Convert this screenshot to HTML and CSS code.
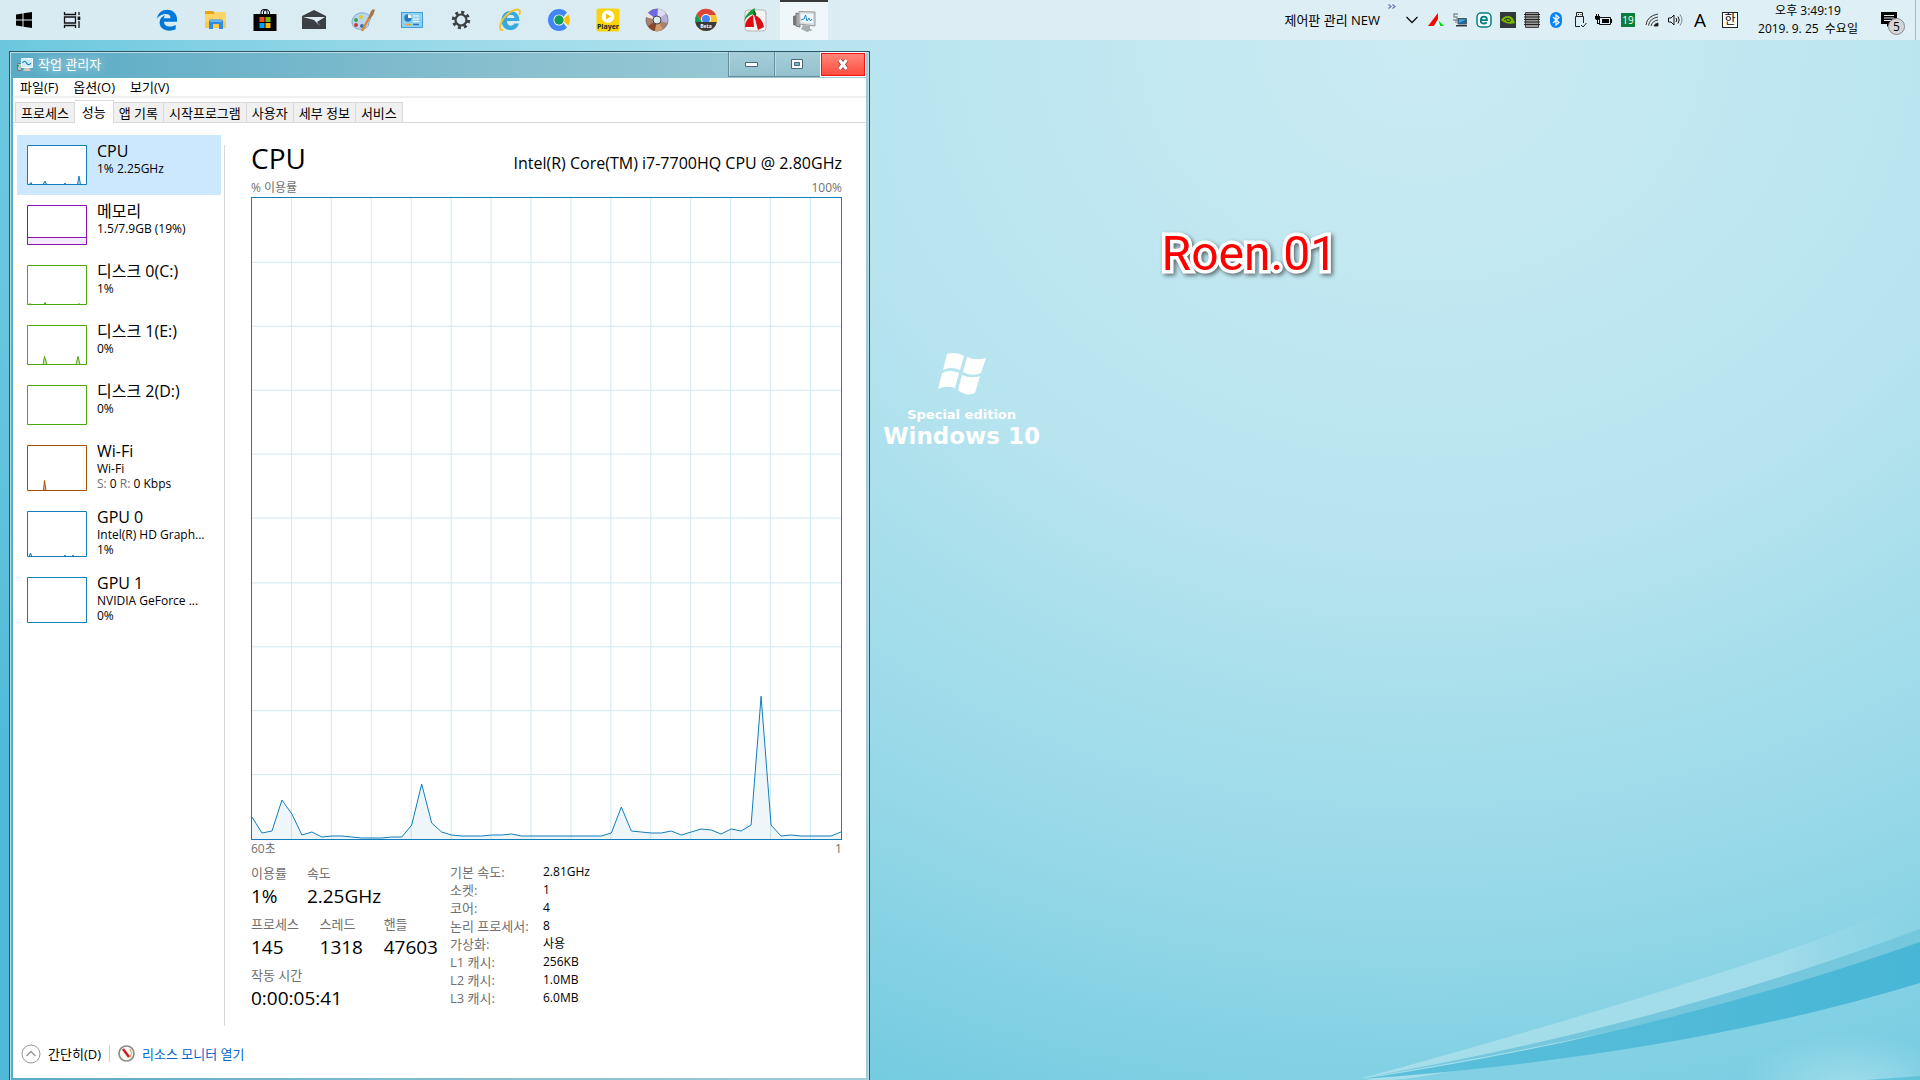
FILE: index.html
```html
<!DOCTYPE html>
<html lang="ko">
<head>
<meta charset="utf-8">
<title>작업 관리자</title>
<link rel="stylesheet" href="styles.css">
</head>
<body>
<svg class="wallpaper" viewBox="0 0 1920 1080" preserveAspectRatio="xMidYMid slice" aria-hidden="true">
  <defs>
    <linearGradient id="lightRay" x1="0" x2="1"><stop offset="0" stop-color="#a6deea"/><stop offset=".75" stop-color="#a2dcea"/><stop offset="1" stop-color="#8fd5e6" stop-opacity="0"/></linearGradient>
    <linearGradient id="darkRay" x1="0" x2="1"><stop offset="0" stop-color="#5cc0da"/><stop offset="1" stop-color="#48b6d6"/></linearGradient>
    <radialGradient id="cornerGlow"><stop offset="0" stop-color="#a8e0ec" stop-opacity=".8"/><stop offset="1" stop-color="#a8e0ec" stop-opacity="0"/></radialGradient>
  </defs>
  <ellipse cx="1850" cy="1084" rx="110" ry="50" fill="url(#cornerGlow)"/>
  <path d="M1362 1078Q1561 1024 1735 968T1920 884V929Q1755 990 1577 1040T1362 1078Z" fill="url(#lightRay)"/>
  <path d="M1362 1078Q1660 1026 1920 929V945Q1700 1024 1362 1078Z" fill="#74c7dd"/>
  <path d="M1362 1079Q1660 1034 1920 942V983Q1680 1056 1362 1079Z" fill="url(#darkRay)"/>
  <path d="M1866 1080L1920 1076V1080Z" fill="#62c2da"/>
</svg>

<header class="taskbar">
  <nav class="system-buttons" aria-label="시스템">
    <button class="task" aria-label="시작"><svg width="18" height="18" viewBox="0 0 18 18"><path d="M1 3.5L7.5 2.5V8.500H1ZM8.500 2.300L17 1V8.500H8.500ZM1 9.500H7.500V15.500L1 14.500ZM8.500 9.500H17V17L8.500 15.700Z"/></svg></button>
    <button class="task" aria-label="작업 보기"><svg width="18" height="18" viewBox="0 0 18 18" fill="none" stroke="#111" stroke-width="1.300"><path d="M1.500 1V3.500H12.500V1M1.500 17V14.500H12.500V17M1.500 6H12.500V12H1.500ZM16 1V4M16 10V17"/><path d="M16 5.500V9" stroke-width="2.600"/></svg></button>
  </nav>
  <nav class="pinned" aria-label="앱">
    <button class="task" aria-label="Edge"><svg width="22" height="22" viewBox="0 0 22 22"><path fill="#0078d7" d="M1 9.500C2 4 6 .8 11.300.8 17.500.8 21 5.500 21 10V12.700H8C8 16 11 17.600 14 17.600 16.400 17.600 18.300 16.800 19.700 16V20.300C18 21.200 15.800 21.700 13.200 21.700 7.500 21.700 3.600 18.300 3.600 13.600 3.600 10.200 5.800 7.300 9 6.200 8.300 7 7.900 8.100 7.800 9.200H14.500C14.500 6.500 12.800 5.100 10 5.100 6.400 5.100 3 7 1 9.500Z"/></svg></button>
    <button class="task" aria-label="파일 탐색기"><svg width="22" height="20" viewBox="0 0 22 20"><path fill="#e6a518" d="M0 1H8L10 3V6H0Z"/><path fill="#ffd567" d="M0 4H9L11 2H21V18H0Z"/><path fill="#fbc94d" d="M0 12H21V18H0Z"/><path fill="#2f8be0" d="M4 19V11Q4 9.500 5.500 9.500H16.500Q18 9.500 18 11V19H14V14H8V19Z"/><path fill="#63b3f2" d="M5 10H17V12H5Z"/></svg></button>
    <button class="task" aria-label="스토어"><svg width="24" height="24" viewBox="0 0 24 24"><path d="M8 7V4Q8 1.500 11 1.500T14 4V7M10.500 7V4Q10.500 1.500 13 1.500T16.500 4V7" fill="none" stroke="#000" stroke-width="1"/><path d="M.5 6H23.500V23H.5Z"/><path fill="#f25022" d="M6.500 9H11.500V14H6.500Z"/><path fill="#7fba00" d="M12.500 9H17.500V14H12.500Z"/><path fill="#00a4ef" d="M6.500 15H11.500V20H6.500Z"/><path fill="#ffb900" d="M12.500 15H17.500V20H12.500Z"/></svg></button>
    <button class="task" aria-label="메일"><svg width="26" height="22" viewBox="0 0 26 22"><path fill="#3b4045" d="M1 7L13 1 25 7V20H1Z"/><path fill="#dcecf2" d="M2 8H24L16 13 19 17 13 11Z"/></svg></button>
    <button class="task" aria-label="그림판"><svg width="26" height="24" viewBox="0 0 26 24"><path fill="#b9d8ee" stroke="#7fabcf" d="M2 14C2 8 8 4 14 5 19 6 22 9 20 12 18 14 20 18 16 20 11 23 2 21 2 14Z"/><circle cx="6" cy="12" r="2" fill="#46a04a"/><circle cx="11" cy="9" r="2" fill="#e5c732"/><circle cx="6" cy="17" r="2" fill="#cf3c2f"/><circle cx="12" cy="18" r="2" fill="#3d6ec2"/><path d="M12 23L19 10" stroke="#dd8a32" stroke-width="2.500"/><path d="M18 10L21 3Q23 0 25 2 24 7 20 11Z" fill="#a8774b"/></svg></button>
    <button class="task" aria-label="제어판"><svg width="22" height="18" viewBox="0 0 22 18"><path fill="#3f9edb" d="M0 1H22V17H0Z"/><path fill="#8fd0f5" d="M1 2H21V16H1Z"/><circle cx="7" cy="7" r="3.700" fill="#2779bf"/><path fill="#fff" d="M7 7V3.300A3.700 3.700 0 0 1 10.700 7Z"/><path stroke="#fff" d="M12 5H18M12 8H18M12 10.500H18"/><path stroke="#f6a623" stroke-width="1.500" d="M4 13.500H11"/><path stroke="#2779bf" stroke-width="1.500" d="M12 13.500H18"/></svg></button>
    <button class="task" aria-label="설정"><svg width="20" height="20" viewBox="0 0 20 20" fill="none" stroke="#3c4043"><circle cx="10" cy="10" r="5.500" stroke-width="2.200"/><circle cx="10" cy="10" r="7.700" stroke-width="3" stroke-dasharray="3.020 3.020"/></svg></button>
    <button class="task" aria-label="Internet Explorer"><svg width="24" height="24" viewBox="0 0 24 24"><path fill="#36a9e1" d="M12 3C18 3 21.500 7 21.500 13H9C9 19 15 18.500 16.500 15.500H21C19.500 20 16.500 22 12.500 22 7 22 3.500 18 3.500 12.500S7 3 12 3ZM9 10H16.500C16.500 5.800 9 5.800 9 10Z"/><path fill="none" stroke="#f4c430" stroke-width="2" d="M5 22C1 23 1 17 5 11 10 4 18 0 21 2 22.500 3 22 5 21 7"/></svg></button>
    <button class="task" aria-label="브라우저"><svg width="22" height="22" viewBox="0 0 22 22"><circle cx="11" cy="11" r="8" fill="none" stroke="#4285f4" stroke-width="6"/><path fill="#dcecf2" d="M13 11L20 2 23 11 20 20Z"/><path fill="#fbbc05" d="M14 11L20.500 5.500 22 11 20.500 16.500Z"/><circle cx="11" cy="11" r="5.500" fill="#fff"/><circle cx="11" cy="11" r="4.700" fill="#0f9d58"/></svg></button>
    <button class="task" aria-label="플레이어"><svg width="24" height="24" viewBox="0 0 24 24"><rect x=".5" y=".5" width="23" height="23" rx="2" fill="#f9d30d"/><circle cx="12" cy="8.500" r="6.300" fill="#fff"/><path fill="#f0bf00" d="M10 5.500L15 8.500 10 11.500Z"/><text x="12" y="21" text-anchor="middle" class="icon-text" fill="#222">Player</text></svg></button>
    <button class="task" aria-label="디스크"><svg width="24" height="24" viewBox="0 0 24 24"><circle cx="12" cy="12" r="11" fill="#a9826f" stroke="#777"/><path fill="#7068e8" d="M12 12L3 5Q7 1 13 1Z"/><path fill="#dcdcf5" d="M12 12L13 1Q18 1 21 6Z"/><path fill="#b6afd8" d="M12 12L21 6Q24 11 22 15Z"/><path fill="#8a4a28" d="M12 12L3 18Q5 22 10 23Z"/><path fill="#d39a70" d="M12 12L10 23Q14 24 18 21Z"/><path fill="#efe8e8" d="M12 12L1 9Q1 6 3 5Z"/><circle cx="12" cy="12" r="4" fill="#dcecf2" stroke="#444"/></svg></button>
    <button class="task" aria-label="Chrome Beta"><svg width="24" height="24" viewBox="0 0 24 24"><circle cx="12" cy="12" r="11" fill="#fbc02d"/><path fill="#db4437" d="M2.500 6.500A11 11 0 0 1 22 7H12L8 13Z"/><path fill="#0f9d58" d="M2.500 6.500L8 14H1.200A11 11 0 0 1 2.500 6.500Z"/><circle cx="12" cy="11" r="5" fill="#fff"/><circle cx="12" cy="11" r="4" fill="#4285f4"/><path fill="#3a3a3a" d="M1.200 14H22.800A11 11 0 0 1 1.200 14Z"/><text x="12" y="19.500" text-anchor="middle" class="icon-text tiny" fill="#fff">Beta</text></svg></button>
    <button class="task" aria-label="캡처"><svg width="26" height="26" viewBox="0 0 26 26"><rect x="3" y="3" width="21" height="21" rx="3" fill="#f4f4f4" stroke="#b5b5b5"/><path fill="#1b9a36" d="M2 14Q4 5 13 1L12 7Q6 8 2 14Z"/><path fill="#0a6c1f" d="M12 3Q15 6 14 9L11 8Z"/><path fill="#e30b13" d="M3 20Q3 12 11 8L12 20Z"/><path fill="#d80f16" d="M12 8Q20 10 22 20L16 23Z"/></svg></button>
    <button class="task active" aria-label="작업 관리자"><svg width="24" height="22" viewBox="0 0 24 22"><path fill="#777" d="M1 6L5 5V16L1 15Z"/><path fill="#aaa" stroke="#777" d="M4 3L8 4V17L4 16Z"/><path fill="#d9dde0" stroke="#999" d="M7 1.500L23 2V16L7 14Z"/><path fill="#eaf7ff" d="M9 3.500L21 4V13.500L9 12Z"/><path fill="none" stroke="#2488cc" d="M9 10L12 9 13.500 5 15 11 17 8 18.500 11 20 9"/><path fill="#a9adb0" d="M11 15L18 16V19L21 20 15 22 9 19Z"/></svg></button>
  </nav>
  <div class="tray">
    <span class="toolbar-label">제어판 관리 NEW</span>
    <button class="more" aria-label="더 보기"><svg width="8" height="5" viewBox="0 0 8 5" fill="none" stroke="#6a74b4" stroke-width="1.200"><path d="M.5.500L3 2.500.5 4.500M4.500.500L7 2.500 4.500 4.500"/></svg></button>
    <button class="tray-icon" aria-label="숨겨진 아이콘"><svg width="14" height="8" viewBox="0 0 14 8" fill="none" stroke="#111" stroke-width="1.300"><path d="M1.500 1L7 6.500 12.500 1"/></svg></button>
    <button class="tray-icon" aria-label="캡처"><svg width="16" height="14" viewBox="0 0 16 14"><path fill="#f00" d="M0 13L10 0V7L6 13Z"/><path fill="#00e000" d="M10 7L16 13H12Z"/><path fill="#dff" d="M6 13L10 6 12 13Z"/></svg></button>
    <button class="tray-icon" aria-label="네트워크"><svg width="16" height="16" viewBox="0 0 16 16"><path fill="none" stroke="#8a9093" stroke-width="1.300" d="M6 2H2V5H5V8H1M4 8V11"/><path fill="#156a9f" stroke="#4c575e" d="M6 6.500H14.500V12H6Z"/><path fill="#4aa9db" d="M7 7.500H14L7 11Z"/><path fill="#30383e" d="M4 13H15V14.500H4Z"/></svg></button>
    <button class="tray-icon" aria-label="ESET"><svg width="16" height="16" viewBox="0 0 16 16"><rect x="1" y="1" width="14" height="14" rx="4" fill="#fff" stroke="#007e85" stroke-width="1.500"/><path fill="none" stroke="#007e85" stroke-width="1.800" d="M4.800 8.200H11Q11 4.700 8 4.700T4.800 8.200 8 11.500Q9.500 11.500 10.800 10.500"/></svg></button>
    <button class="tray-icon" aria-label="NVIDIA"><svg width="16" height="16" viewBox="0 0 16 16"><path fill="#33383d" d="M0 0H16V16H0Z"/><path fill="#76b900" d="M1 8Q4 3.500 9 4 13 4.500 15 11 12 12 8 11.500 3.500 11 1 8Z"/><path fill="none" stroke="#263a08" d="M4 8Q7 5 10 7 12 9 9 9.500T6.500 7.500"/></svg></button>
    <button class="tray-icon" aria-label="메모리"><svg width="16" height="16" viewBox="0 0 16 16"><path fill="#999" stroke="#444" d="M1.500.5H14.500V15.500H1.500Z"/><path stroke="#222" stroke-width="1.200" d="M0 2.500H16M0 5H16M0 7.500H16M0 10H16M0 12.500H16"/></svg></button>
    <button class="tray-icon" aria-label="Bluetooth"><svg width="14" height="16" viewBox="0 0 14 16"><rect x="1" y="0" width="12" height="16" rx="6" fill="#0a84f5"/><path fill="none" stroke="#fff" stroke-width="1.200" d="M4 5L10 10.500 7 13V3L10 5.500 4 11"/></svg></button>
    <button class="tray-icon" aria-label="USB"><svg width="14" height="18" viewBox="0 0 14 18" fill="none" stroke="#222"><path d="M3.500 1.500H9.500V5.500H3.500ZM2.500 5.500H10.500V12M2.500 5.500V15.500H7M8 14L10 16 13.500 12M5 3.500H6M7.500 3.500H8.500"/></svg></button>
    <button class="tray-icon" aria-label="배터리"><svg width="18" height="12" viewBox="0 0 18 12"><path fill="none" stroke="#111" d="M4.500 3.500H15.500V10.500H4.500Z"/><path d="M7 5H14V9H7ZM16 5H17V9H16ZM0 2H5V4Q5 6 3 6H2Q0 6 0 4ZM1 0H2V2H1ZM3 0H4V2H3ZM2 6H3V9H4V8H5V10H2Z"/></svg></button>
    <button class="tray-icon" aria-label="온도 19"><span class="temperature">19</span></button>
    <button class="tray-icon" aria-label="Wi-Fi"><svg width="14" height="14" viewBox="0 0 14 14" fill="none" stroke="#333"><path d="M1 12Q2 3 13 1M3.500 12.500Q4.500 5.500 13 4M6 13Q7 8 13 7"/><path d="M9 13Q9.500 10.500 13 10V13Z" fill="#111"/></svg></button>
    <button class="tray-icon" aria-label="볼륨"><svg width="18" height="14" viewBox="0 0 18 14" fill="none" stroke="#111"><path d="M1.500 5H4L7 2V12L4 9H1.500ZM9 5Q10.500 7 9 9M11 3.500Q13.500 7 11 10.500"/><path stroke="#888" d="M13 1.500Q17 7 13 12.500"/></svg></button>
    <button class="tray-icon ime">A</button>
    <button class="tray-icon hangul"><span class="hangul-box">한</span></button>
    <div class="clock"><time>오후 3:49:19</time><time>2019. 9. 25&nbsp; 수요일</time></div>
    <button class="notifications" aria-label="알림"><svg width="17" height="16" viewBox="0 0 17 16"><path d="M0 0H16V12H9L6 15V12H0Z"/><path stroke="#dcecf2" stroke-width="1.200" d="M3 3.500H13M3 6H13M3 8.500H13"/></svg><span class="badge">5</span></button>
    <span class="show-desktop"></span>
  </div>
</header>

<main class="desktop">
  <section class="window" aria-label="작업 관리자">
    <header class="titlebar">
      <svg width="17" height="14" viewBox="0 0 17 14"><path fill="#bfc5c8" stroke="#6a7b82" d="M.5 5.500H4.500V12.500H.5Z"/><path fill="#2db330" d="M1 7H2V9H1Z"/><path fill="#e8eef2" stroke="#fff" d="M4.500.5H15.500V9.500H4.500Z"/><path fill="#cdeeff" d="M5 1H15V9H5Z"/><path fill="none" stroke="#1a78ba" stroke-width="1.200" d="M5.500 5Q7.500 1.500 9.500 5T14 5"/><path fill="#d9c7bd" d="M8 10H12L14 13H6Z"/></svg>
      <h1>작업 관리자</h1>
      <div class="window-buttons">
        <button aria-label="최소화"><svg width="13" height="6" viewBox="0 0 13 6"><path fill="#fff" stroke="#476b77" d="M.5 1.500H12.500V5.500H.5Z"/></svg></button>
        <button aria-label="최대화"><svg width="12" height="10" viewBox="0 0 12 10"><path fill="#fff" stroke="#476b77" d="M.5.5H11.500V9.500H.5Z"/><path fill="#7fb5c4" stroke="#476b77" d="M3.500 3.500H8.500V6.500H3.500Z"/></svg></button>
        <button class="close" aria-label="닫기"><svg width="12" height="11" viewBox="0 0 12 11"><path d="M2.500 1L9.500 10M9.500 1L2.500 10" stroke="#7d4540" stroke-width="4.500"/><path d="M2.500 1L9.500 10M9.500 1L2.500 10" stroke="#fff" stroke-width="3"/></svg></button>
      </div>
    </header>
    <div class="client">
      <nav class="menu"><button>파일(F)</button><button>옵션(O)</button><button>보기(V)</button></nav>
      <div class="tabs" role="tablist">
        <button role="tab">프로세스</button><button role="tab" aria-selected="true" class="selected">성능</button><button role="tab">앱 기록</button><button role="tab">시작프로그램</button><button role="tab">사용자</button><button role="tab">세부 정보</button><button role="tab">서비스</button>
      </div>
      <div class="performance">
        <aside class="resources">
          <button class="resource current"><svg class="thumb cpu" viewBox="0 0 60 40"><path d="M.5.5H59.500V39.500H.5Z"/><path class="spike" d="M2 39.500L4 37.500 5 39.500M16 39.500L18 36 19.500 39.500M37 39.500L38 38 39 39.500M50.500 39.500L52 31 53.500 39.500"/></svg><span class="info"><b>CPU</b><span>1% 2.25GHz</span></span></button>
          <button class="resource"><svg class="thumb memory" viewBox="0 0 60 40"><path d="M.5.5H59.500V39.500H.5Z"/><path class="fill" d="M.5 32.500H59.500V39.500H.5Z"/></svg><span class="info"><b>메모리</b><span>1.5/7.9GB (19%)</span></span></button>
          <button class="resource"><svg class="thumb disk" viewBox="0 0 60 40"><path d="M.5.5H59.500V39.500H.5Z"/><path class="spike" d="M2 39.500L3 38.500 4 39.500M17 39.500L18 37.500 19 39.500M51 39.500L52 38.500 53 39.500"/></svg><span class="info"><b>디스크 0(C:)</b><span>1%</span></span></button>
          <button class="resource"><svg class="thumb disk" viewBox="0 0 60 40"><path d="M.5.5H59.500V39.500H.5Z"/><path class="spike" d="M16 39.500L17.500 31.500 20 39.500M49 39.500L51 31.500 53 39.500"/></svg><span class="info"><b>디스크 1(E:)</b><span>0%</span></span></button>
          <button class="resource"><svg class="thumb disk" viewBox="0 0 60 40"><path d="M.5.5H59.500V39.500H.5Z"/></svg><span class="info"><b>디스크 2(D:)</b><span>0%</span></span></button>
          <button class="resource tall"><svg class="thumb wifi" viewBox="0 0 60 46"><path d="M.5.5H59.500V45.500H.5Z"/><path class="spike" d="M16.500 45.500L17.500 35.500 19 45.500"/></svg><span class="info"><b>Wi-Fi</b><span>Wi-Fi</span><span><i>S:</i> 0 <i>R:</i> 0 Kbps</span></span></button>
          <button class="resource tall"><svg class="thumb cpu" viewBox="0 0 60 46"><path d="M.5.5H59.500V45.500H.5Z"/><path class="spike" d="M2 45.500L3.500 42 5 45.500M37 45.500L38 44 39 45.500M45 45.500L46 44 47 45.500"/></svg><span class="info"><b>GPU 0</b><span>Intel(R) HD Graph...</span><span>1%</span></span></button>
          <button class="resource tall"><svg class="thumb cpu" viewBox="0 0 60 46"><path d="M.5.5H59.500V45.500H.5Z"/></svg><span class="info"><b>GPU 1</b><span>NVIDIA GeForce ...</span><span>0%</span></span></button>
        </aside>
        <section class="details">
          <div class="heading"><h2>CPU</h2><span>Intel(R) Core(TM) i7-7700HQ CPU @ 2.80GHz</span></div>
          <div class="scale"><span>% 이용률</span><span>100%</span></div>
          <svg class="graph" viewBox="0 0 590 642" preserveAspectRatio="none" role="img" aria-label="CPU 이용률">
            <path class="grid" d="M39.500 0V642M79.500 0V642M119.500 0V642M159.500 0V642M199.500 0V642M239.500 0V642M279.500 0V642M319.500 0V642M359.500 0V642M399.500 0V642M439.500 0V642M479.500 0V642M519.500 0V642M559.500 0V642M0 64.500H590M0 128.500H590M0 192.500H590M0 256.500H590M0 320.500H590M0 385.500H590M0 449.500H590M0 513.500H590M0 577.500H590"/>
            <path class="area" d="M0 642V620L10 636 20 634 30 603 40 617 50 638 60 635 70 640 80 639 90 639 100 640 110 641 120 641 130 641 140 640 150 640 160 628 170 587 180 626 190 635 200 638 210 639 230 639 240 638 250 638 260 637 270 639 350 639 360 636 370 610 380 634 390 635 400 636 410 636 420 634 430 638 440 635 450 632 460 633 470 637 480 632 490 634 500 628 510 499 520 628 530 639 540 638 550 639 580 639 590 635V642"/>
            <path class="line" d="M0 620L10 636 20 634 30 603 40 617 50 638 60 635 70 640 80 639 90 639 100 640 110 641 120 641 130 641 140 640 150 640 160 628 170 587 180 626 190 635 200 638 210 639 230 639 240 638 250 638 260 637 270 639 350 639 360 636 370 610 380 634 390 635 400 636 410 636 420 634 430 638 440 635 450 632 460 633 470 637 480 632 490 634 500 628 510 499 520 628 530 639 540 638 550 639 580 639 590 635"/>
          </svg>
          <div class="scale"><span>60초</span><span>1</span></div>
          <div class="figures">
            <div class="counters">
              <dl class="two"><div><dt>이용률</dt><dd>1%</dd></div><div><dt>속도</dt><dd>2.25GHz</dd></div></dl>
              <dl class="three"><div><dt>프로세스</dt><dd>145</dd></div><div><dt>스레드</dt><dd>1318</dd></div><div><dt>핸들</dt><dd>47603</dd></div></dl>
              <dl><div><dt>작동 시간</dt><dd>0:00:05:41</dd></div></dl>
            </div>
            <table class="specs">
              <tr><th scope="row">기본 속도:</th><td>2.81GHz</td></tr>
              <tr><th scope="row">소켓:</th><td>1</td></tr>
              <tr><th scope="row">코어:</th><td>4</td></tr>
              <tr><th scope="row">논리 프로세서:</th><td>8</td></tr>
              <tr><th scope="row">가상화:</th><td>사용</td></tr>
              <tr><th scope="row">L1 캐시:</th><td>256KB</td></tr>
              <tr><th scope="row">L2 캐시:</th><td>1.0MB</td></tr>
              <tr><th scope="row">L3 캐시:</th><td>6.0MB</td></tr>
            </table>
          </div>
        </section>
      </div>
      <footer class="statusbar">
        <button class="fewer"><svg width="20" height="20" viewBox="0 0 20 20" fill="none" stroke="#999"><circle cx="10" cy="10" r="9"/><path stroke-width="1.500" d="M5.500 12L10 7.500 14.500 12"/></svg>간단히(D)</button>
        <a class="monitor" href="#"><svg width="17" height="17" viewBox="0 0 17 17"><circle cx="8.500" cy="8.500" r="7.500" fill="#fbfaf5" stroke="#8a8f86" stroke-width="1.700"/><path fill="none" stroke="#d9935c" d="M12 4Q15 8 12 12.500"/><path stroke="#d01c2a" stroke-width="2.500" d="M5 4L11 12"/></svg>리소스 모니터 열기</a>
      </footer>
    </div>
  </section>

  <div class="edition">
    <svg width="50" height="44" viewBox="0 0 50 44" fill="#fff"><path d="M10 2Q19-1 27 4L23 18Q14 14 6 18ZM30 5Q39 9 49 6L44 21Q35 25 26 20ZM5 21Q13 17 22 21L18 36Q9 33 1 37ZM25 23Q34 27 43 24L38 41Q29 45 21 38Z"/></svg>
    <span class="edition-small">Special edition</span>
    <strong>Windows 10</strong>
  </div>
  <div class="signature">Roen.01</div>
</main>
</body>
</html>
```
FILE: styles.css
```css
* { box-sizing: border-box; }

body {
  margin: 0;
  min-height: 100vh;
  display: flex;
  flex-direction: column;
  overflow: hidden;
  color: #000;
  font: 12px/16px "Open Sans", "Noto Sans CJK KR", sans-serif;
  background: radial-gradient(ellipse 86% 130% at 74% 4%, #cbebf3 0%, #b7e4ef 36%, #96d8e8 62%, #6fc9df 84%, #50b9d9 100%);
}

button {
  margin: 0;
  padding: 0;
  border: 0;
  background: none;
  color: inherit;
  font: inherit;
}

svg { display: block; flex: none; }

.wallpaper {
  position: absolute;
  inset: 0;
  width: 100%;
  height: 100%;
}

/* Taskbar */

.taskbar {
  position: relative;
  display: flex;
  height: 40px;
  background: linear-gradient(90deg, #d8ebf2, #dcedf3 50%, #def0f5);
}

.system-buttons, .pinned, .tray { display: flex; align-items: center; }
.pinned { margin-left: 47px; gap: 1px; }

.task {
  display: flex;
  justify-content: center;
  align-items: center;
  width: 48px;
  height: 40px;
}

.task.active {
  background: #f0f7fb;
  border-top: 2px solid #3a3a3a;
}

.icon-text { font: bold 7px "Open Sans", sans-serif; }
.icon-text.tiny { font-size: 5px; }

.tray { margin-left: auto; }
.toolbar-label { margin-right: 8px; font-size: 13px; }

.more {
  align-self: flex-start;
  padding: 4px 0;
  margin-right: 4px;
}

.tray-icon {
  display: flex;
  justify-content: center;
  align-items: center;
  width: 24px;
  height: 40px;
}

.temperature {
  width: 14px;
  background: #0c7d3c;
  color: #fff;
  font-size: 10px;
  line-height: 14px;
}

.ime { font-size: 19px; }
.hangul { width: 36px; }

.hangul-box {
  width: 16px;
  border: 1px solid #222;
  background: #fff;
  line-height: 14px;
}

.clock {
  display: flex;
  flex-direction: column;
  gap: 2px;
  width: 120px;
  text-align: center;
}

.notifications {
  position: relative;
  width: 47px;
  padding: 0 13px;
}

.badge {
  position: absolute;
  left: 20px;
  top: 6px;
  width: 17px;
  height: 17px;
  border: 1px solid #888;
  border-radius: 50%;
  background: #d4d6d7;
  line-height: 15px;
}

.show-desktop {
  width: 5px;
  height: 40px;
  border-left: 1px solid #a8bcc3;
}

/* Desktop */

.desktop {
  position: relative;
  flex: 1;
  display: flex;
  padding: 11px 0 0 9px;
}

.edition {
  position: absolute;
  left: 46%;
  top: 30%;
  display: flex;
  flex-direction: column;
  align-items: center;
  color: #fff;
  font-family: "DejaVu Sans", sans-serif;
  font-weight: bold;
}

.edition-small { margin-top: 11px; font-size: 13px; line-height: 16px; }
.edition strong { font-size: 23px; line-height: 26px; }

.signature {
  position: absolute;
  left: 60.5%;
  top: 18%;
  color: #f00;
  font: 48px/54px Roboto, sans-serif;
  -webkit-text-stroke: 7px #fff;
  paint-order: stroke fill;
  filter: drop-shadow(2px 2px 2px #0008);
}

/* Task manager window */

.window {
  width: calc(45% + 1px);
  display: flex;
  flex-direction: column;
  padding: 0 3px 2px;
  border: 1px solid #2d5463;
  border-bottom: 0;
  background: linear-gradient(90deg, #5aabc6, #8ac0cf 60%, #9fccd8);
  box-shadow: inset 1px 1px #b9dfea, inset -1px 0 #b9dfea;
}

.titlebar { display: flex; align-items: center; height: 26px; padding-left: 4px; }

.titlebar h1 {
  flex: 1;
  margin: 0 0 0 4px;
  padding-bottom: 3px;
  color: #fff;
  font-size: 13px;
  font-weight: normal;
  text-shadow: 0 0 8px #fffc;
}

.window-buttons { display: flex; align-self: stretch; padding-bottom: 1px; }

.window-buttons button {
  display: flex;
  justify-content: center;
  align-items: center;
  width: 46px;
  border: 1px solid #668d99;
  border-width: 0 0 1px 1px;
  background: linear-gradient(#a6ced8, #93c1cd);
  box-shadow: inset 1px 0 #c0dde4;
}

.window-buttons .close {
  border: 1px solid #fff;
  background: linear-gradient(#ff8a7c, #ff4a3c);
  box-shadow: inset 0 0 0 1px #f01414;
}

.client {
  flex: 1;
  display: flex;
  flex-direction: column;
  background: #fff;
}

.menu {
  display: flex;
  gap: 15px;
  height: 20px;
  padding-left: 7px;
  border-bottom: 2px solid #f0f0f0;
  font-size: 13px;
  line-height: 18px;
}

.tabs {
  display: flex;
  align-items: flex-end;
  height: 25px;
  padding-left: 2px;
  border-bottom: 1px solid #d9d9d9;
  font-size: 13px;
}

.tabs button {
  height: 20px;
  padding: 0 5px;
  border: 1px solid #d9d9d9;
  border-width: 1px 1px 0 0;
  background: #f0f0f0;
}

.tabs button:first-child { border-left-width: 1px; }

.tabs .selected {
  height: 23px;
  margin-bottom: -1px;
  padding: 0 7px;
  background: #fff;
}

.performance { flex: 1; display: flex; padding: 12px 24px 0 4px; }

.resources { width: 204px; }

.resource {
  display: flex;
  align-items: flex-start;
  gap: 10px;
  width: 100%;
  height: 60px;
  padding: 10px;
  text-align: left;
}

.resource.tall { height: 66px; }
.current { background: #cce8ff; }

.thumb { width: 60px; fill: #fff; stroke: currentColor; }
.thumb .spike { fill: currentColor; fill-opacity: .3; }
.thumb .fill { fill: #f5eaf9; }
.cpu { color: #117dbb; }
.memory { color: #8b12ae; }
.disk { color: #4da60c; }
.wifi { color: #a74f01; }

.info { display: flex; flex-direction: column; margin-top: -4px; line-height: 15px; white-space: nowrap; }
.info b { font-size: 16px; font-weight: normal; line-height: 20px; }
.info i { color: #707070; font-style: normal; }

.details {
  flex: 1;
  display: flex;
  flex-direction: column;
  margin: 10px 0 0 3px;
  padding-left: 26px;
  border-left: 1px solid #d9d9d9;
}

.heading {
  display: flex;
  justify-content: space-between;
  align-items: baseline;
  margin-top: -5px;
  padding-bottom: 3px;
}

.heading h2 { margin: 0; font-size: 28px; font-weight: normal; line-height: 36px; }
.heading span { font-size: 16px; }

.scale { display: flex; justify-content: space-between; color: #707070; line-height: 18px; }

.graph {
  width: 100%;
  flex: 1 1 0;
  min-height: 200px;
  border: 1px solid #117dbb;
}

.graph path { fill: none; vector-effect: non-scaling-stroke; }
.graph .grid { stroke: #d2e8f2; }
.graph .area { fill: #117dbb; fill-opacity: .07; }
.graph .line { stroke: #117dbb; }

.figures { display: flex; gap: 12px; padding: 5px 0 10px; }
.counters { width: 187px; }
.counters dl { display: flex; margin: 0; height: 51px; }
.counters .two { gap: 20px; }
.counters .three { justify-content: space-between; }
.counters dt { color: #707070; font-size: 13px; line-height: 20px; }
.counters dd { margin: 0; font-size: 19px; line-height: 26px; }

.specs { align-self: flex-start; border-collapse: collapse; line-height: 18px; }
.specs th { width: 93px; padding: 0; color: #707070; font-size: 13px; font-weight: normal; text-align: left; }
.specs td { padding: 0; }

.statusbar {
  display: flex;
  align-items: center;
  height: 52px;
  padding: 3px 0 0 8px;
  font-size: 13px;
}

.fewer, .monitor { display: flex; align-items: center; gap: 7px; }

.monitor {
  margin-left: 8px;
  padding-left: 8px;
  border-left: 1px solid #d0d0d0;
  color: #0066cc;
  text-decoration: none;
}
```
